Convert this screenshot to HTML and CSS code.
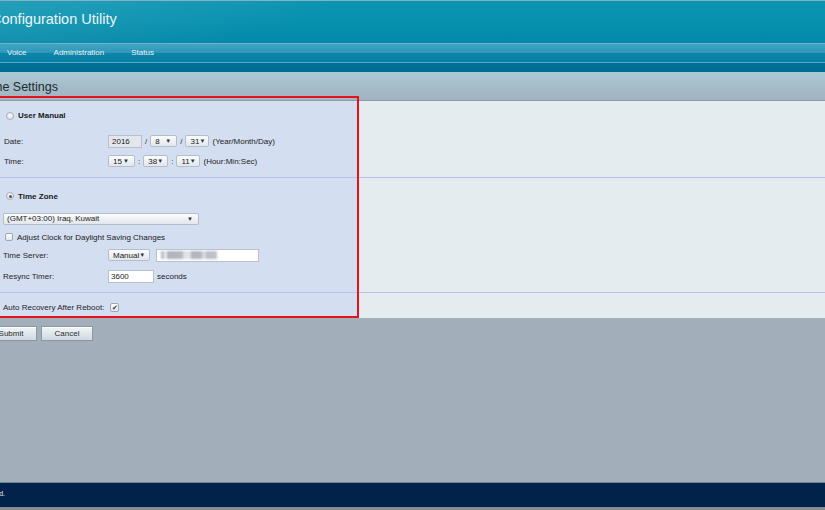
FILE: index.html
```html
<!DOCTYPE html>
<html>
<head>
<meta charset="utf-8">
<link rel="stylesheet" href="styles.css">
</head>
<body>
<div class="page">
  <header class="masthead">
    <div class="brand">Configuration Utility</div>
  </header>
  <nav class="nav">
    <span>Voice</span>
    <span>Administration</span>
    <span>Status</span>
  </nav>
  <div class="titlebar">
    <div class="title-clip"><h1>Time Settings</h1></div>
  </div>
  <main class="content">
    <div class="highlight"></div>

    <div class="row r-um">
      <span class="radio"></span><b class="opt">User Manual</b>
    </div>
    <div class="row r-date">
      <span class="lbl">Date:</span>
      <span class="field disabled w34">2016</span>
      <span class="sep">/</span>
      <span class="select w27">8<i>▼</i></span>
      <span class="sep">/</span>
      <span class="select w24">31<i>▼</i></span>
      <span class="hint">(Year/Month/Day)</span>
    </div>
    <div class="row r-time">
      <span class="lbl">Time:</span>
      <span class="select w27">15<i>▼</i></span>
      <span class="sep">:</span>
      <span class="select w25">38<i>▼</i></span>
      <span class="sep">:</span>
      <span class="select w24">11<i>▼</i></span>
      <span class="hint">(Hour:Min:Sec)</span>
    </div>

    <hr class="rule r-rule1">

    <div class="row r-tz">
      <span class="radio checked"></span><b class="opt">Time Zone</b>
    </div>
    <div class="row r-tzsel">
      <span class="select wide">(GMT+03:00) Iraq, Kuwait<i>▼</i></span>
    </div>
    <div class="row r-dst">
      <span class="check"></span><span class="opt">Adjust Clock for Daylight Saving Changes</span>
    </div>
    <div class="row r-server">
      <span class="lbl lbl3">Time Server:</span>
      <span class="select w42">Manual<i>▼</i></span>
      <span class="field server"><span class="blur"></span></span>
    </div>
    <div class="row r-resync">
      <span class="lbl lbl3">Resync Timer:</span>
      <span class="field w46">3600</span>
      <span class="unit">seconds</span>
    </div>

    <hr class="rule r-rule2">

    <div class="row r-auto">
      <span class="lbl lbl3">Auto Recovery After Reboot:</span>
      <span class="check on">✔</span>
    </div>
  </main>
  <div class="lower">
    <div class="actions">
      <button class="btn">Submit</button>
      <button class="btn">Cancel</button>
    </div>
  </div>
  <footer class="footer">
    <div class="copy-clip"><span>All rights reserved.</span></div>
  </footer>
  <div class="bottom"></div>
</div>
</body>
</html>
```
FILE: styles.css
```css
* { box-sizing: border-box; }
html, body { margin: 0; padding: 0; }
body {
  width: 825px;
  height: 510px;
  overflow: hidden;
  font-family: "Liberation Sans", Arial, sans-serif;
  color: #222;
  background: #a3aebb;
}
.page { width: 825px; height: 510px; display: flex; flex-direction: column; overflow: hidden; }

.masthead {
  height: 43px;
  flex: none;
  border-top: 1px solid #7db3c4;
  background:
    linear-gradient(160deg, rgba(255,255,255,0.10) 0, rgba(255,255,255,0.0) 120px),
    linear-gradient(to bottom, #0c94b2 0, #0891ae 20px, #0388a9 42px);
  padding-top: 9px;
}
.brand {
  margin-left: -9px;
  font-size: 14.5px;
  line-height: 18px;
  color: #eaf6f9;
  white-space: nowrap;
}

.nav {
  height: 29px;
  flex: none;
  display: flex;
  gap: 27px;
  padding-left: 7px;
  padding-top: 5px;
  font-size: 8px;
  line-height: 10px;
  color: #e6f3f7;
  background: linear-gradient(to bottom,
    #6cb4cb 0, #6cb4cb 1px,
    #43a3c1 1px, #2e98b9 10px,
    #0d84a9 10px, #0a7fa5 19px,
    #5aa8c3 19px, #5aa8c3 20px,
    #00729a 20px, #006b91 29px);
}

.titlebar {
  height: 29px;
  flex: none;
  background: linear-gradient(to bottom, #aacad6 0, #a6bdc9 14px, #a2b3c1 28px);
  border-bottom: 1px solid #8a9aa9;
  padding-top: 8px;
}
.title-clip {
  width: 58px;
  display: flex;
  justify-content: flex-end;
  white-space: nowrap;
}
.title-clip h1 {
  margin: 0;
  font-size: 12.5px;
  font-weight: normal;
  line-height: 14px;
  color: #1d2a33;
}

.content {
  position: relative;
  height: 217px;
  flex: none;
  padding-top: 8px;
  background: linear-gradient(to right, #d4def1 0, #d4def1 357px, #e4ecef 357px);
  font-size: 8px;
}
.highlight {
  position: absolute;
  top: -5px;
  left: -3px;
  width: 362px;
  height: 222px;
  border: 2px solid #e5131c;
  pointer-events: none;
}

.row { display: flex; align-items: center; height: 14px; white-space: nowrap; }
.r-um { height: 13px; padding-left: 6px; }
.r-date { margin-top: 12px; }
.r-time { margin-top: 6px; }
.r-tz { margin-top: 11px; padding-left: 6px; }
.r-tzsel { margin-top: 9px; height: 13px; padding-left: 3px; }
.r-dst { margin-top: 5px; padding-left: 5px; }
.r-server { margin-top: 4px; }
.r-resync { margin-top: 7px; }
.r-auto { margin-top: 7px; }

.rule { border: none; height: 1px; margin: 0; background: #b8bfeb; }
.r-rule1 { margin-top: 9px; }
.r-rule2 { margin-top: 9px; }

.lbl { width: 108px; padding-left: 4px; flex: none; color: #262626; }
.lbl3 { padding-left: 3px; }
.opt { margin-left: 4px; color: #1a1a1a; }
b.opt { font-weight: bold; }

.radio {
  width: 8px; height: 8px; border-radius: 50%;
  border: 1px solid #aab1ba;
  background: radial-gradient(circle at 50% 35%, #fbfcfd 0, #dfe3e8 70%);
  flex: none;
  display: flex; align-items: center; justify-content: center;
}
.radio.checked::after {
  content: ""; width: 3px; height: 3px; border-radius: 50%; background: #555;
}
.check {
  width: 8px; height: 8px; border-radius: 2px;
  border: 1px solid #9ea8b3;
  background: linear-gradient(to bottom, #fdfdfe, #e3e8ec);
  flex: none;
}
.check.on {
  width: 9px; height: 9px;
  margin-left: 2px;
  font-size: 7px; line-height: 7px;
  color: #333;
  display: flex; align-items: center; justify-content: center;
}

.field {
  height: 13px;
  border: 1px solid #b8c1cb;
  background: #fff;
  padding-left: 2px;
  display: flex; align-items: center;
  flex: none;
  color: #222;
}
.field.disabled { background: #e3e7ed; padding-left: 3px; }
.select {
  height: 12px;
  border: 1px solid #b5bec8;
  border-radius: 2px;
  background: linear-gradient(to bottom, #fbfcfd, #e2e7ec);
  display: flex; align-items: center; justify-content: space-between;
  padding: 0 5px 0 4px;
  flex: none;
  color: #222;
}
.select i { font-style: normal; font-size: 6px; line-height: 6px; color: #333; }
.w24 { width: 24px; }
.w25 { width: 25px; }
.w27 { width: 27px; }
.w34 { width: 34px; }
.w42 { width: 42px; }
.w46 { width: 46px; }
.wide { width: 196px; padding-right: 5px; padding-left: 3px; }
.sep { margin: 0 3px; color: #333; }
.hint { margin-left: 3px; color: #222; }
.unit { margin-left: 3px; color: #222; }
.server { width: 103px; margin-left: 6px; padding-left: 4px; }
.blur {
  width: 56px; height: 8px;
  background: linear-gradient(to right,
    #b8bcc3 0, #b8bcc3 3px, #e8eaed 3px, #e8eaed 6px,
    #aeb2ba 6px, #b4b8bf 22px, #dfe2e6 22px, #dfe2e6 30px,
    #b0b4bb 30px, #b4b8be 41px, #d7dadf 41px, #d7dadf 45px,
    #babec5 45px, #c0c4ca 56px);
  filter: blur(1px);
}

.lower { flex: 1; background: #a3aebb; padding-top: 8px; }
.actions { display: flex; gap: 4px; margin-left: -15px; }
.btn {
  width: 52px; height: 15px;
  border: 1px solid #8b99a7;
  background: linear-gradient(to bottom, #f0f4f6 0, #dde5ea 60%, #cdd7de 100%);
  font-family: "Liberation Sans", Arial, sans-serif;
  font-size: 8px;
  color: #2a2a2a;
  padding: 0;
  box-shadow: inset 0 1px 0 #fff;
}

.footer {
  height: 25px;
  flex: none;
  background: #01224a;
  border-top: 1px solid #6d8299;
  padding-top: 6px;
}
.copy-clip {
  width: 5px;
  display: flex;
  justify-content: flex-end;
  white-space: nowrap;
  font-size: 7px;
  line-height: 9px;
  color: #e6eaf0;
}
.bottom { height: 3px; flex: none; background: #8c8c8c; }
```
